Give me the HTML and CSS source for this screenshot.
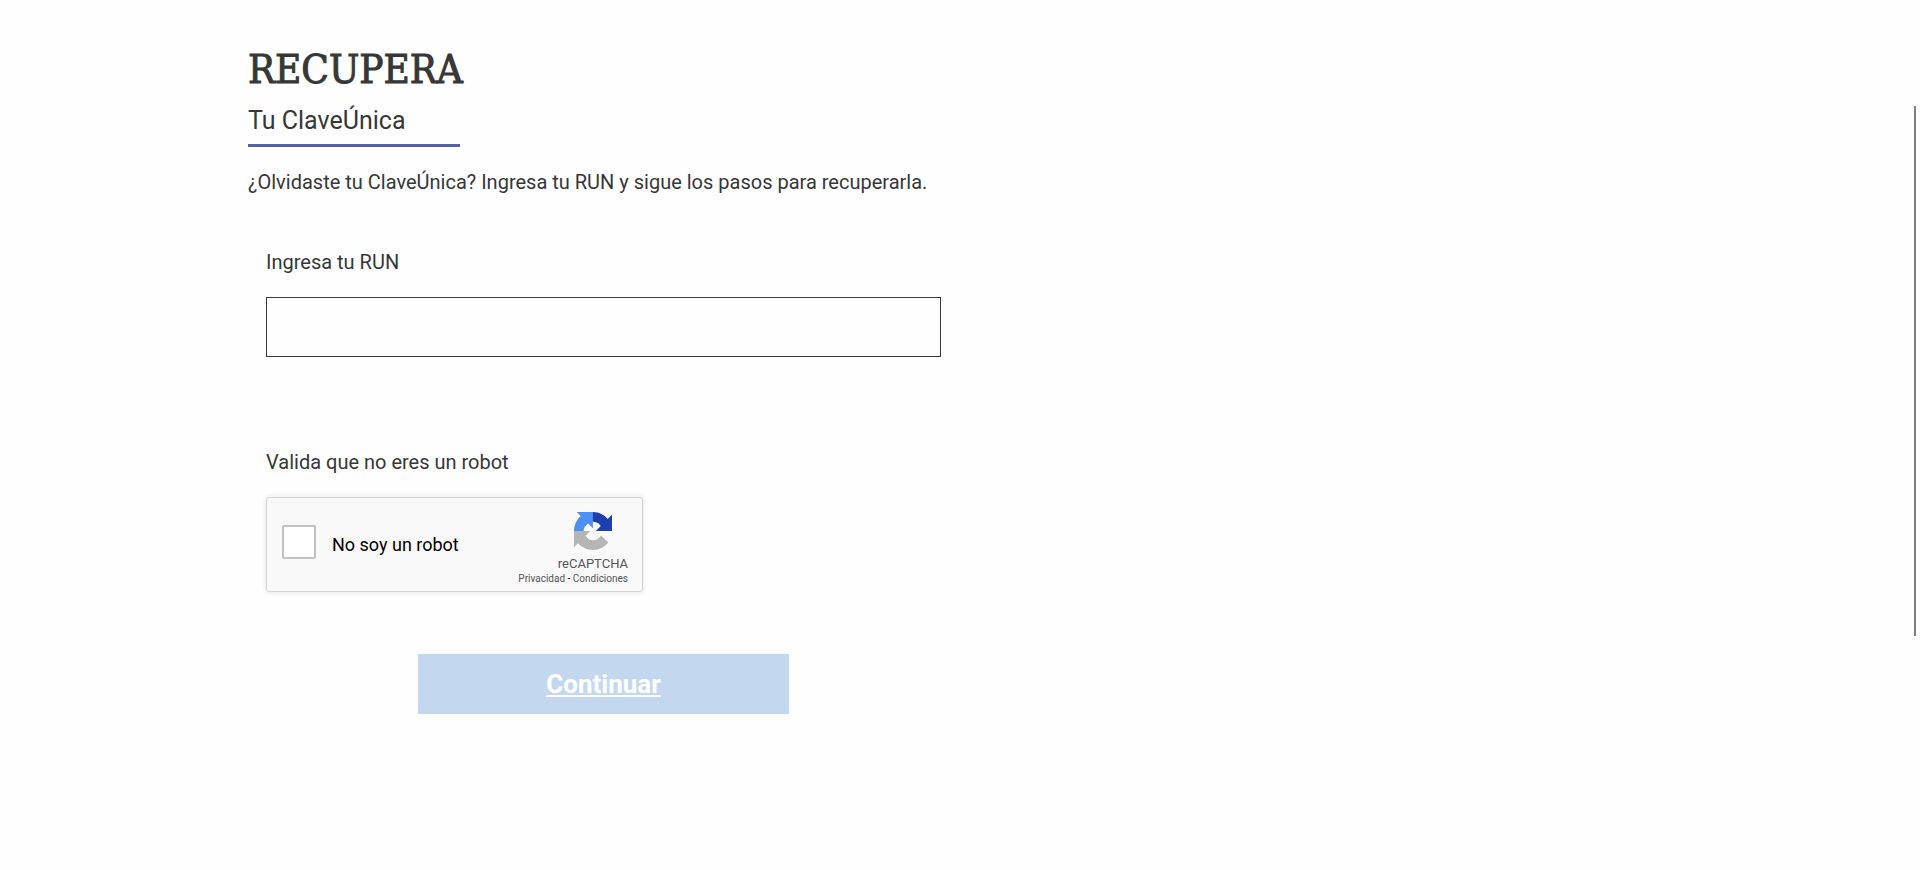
FILE: index.html
```html
<!DOCTYPE html>
<html lang="es">
<head>
    <meta charset="UTF-8">
    <meta name="viewport" content="width=device-width, initial-scale=1.0">
    <title>Recupera tu ClaveÚnica</title>
    <link rel="stylesheet" href="styles.css">
</head>
<body>
    <main class="container">
        <section class="content">
            <!-- Título -->
            <h1 class="title">RECUPERA</h1>
            <h2 class="subtitle">Tu ClaveÚnica</h2>
            <p class="intro">¿Olvidaste tu ClaveÚnica? Ingresa tu RUN y sigue los pasos para recuperarla.</p>

            <!-- Formulario -->
            <form class="recover-form" action="#" method="post">
                <div class="form-group">
                    <label for="run">Ingresa tu RUN</label>
                    <input type="text" id="run" name="run" class="form-control">
                </div>

                <div class="form-group">
                    <p class="form-label">Valida que no eres un robot</p>
                    <div class="captcha">
                        <input type="checkbox" id="robot" name="robot" class="captcha-check">
                        <label for="robot" class="captcha-label">No soy un robot</label>
                        <div class="captcha-brand">
                            <svg class="captcha-logo" viewBox="0 0 64 64" aria-hidden="true">
                                <path fill="#1e40af" d="M64 31.955l-.033-1.37V4.687l-7.16 7.16C50.948 4.674 42.033.093 32.05.093c-10.4 0-19.622 4.96-25.458 12.64l11.736 11.86a15.55 15.55 0 0 1 4.754-5.334c2.05-1.6 4.952-2.906 8.968-2.906.485 0 .86.057 1.135.163 4.976.393 9.288 3.14 11.828 7.124l-8.307 8.307L64 31.953"/>
                                <path fill="#4c8ff5" d="M31.862.094l-1.37.033H4.594l7.16 7.16C4.58 13.147 0 22.06 0 32.046c0 10.4 4.96 19.622 12.64 25.458L24.5 45.768a15.55 15.55 0 0 1-5.334-4.754c-1.6-2.05-2.906-4.952-2.906-8.968 0-.485.057-.86.163-1.135.393-4.976 3.14-9.288 7.124-11.828l8.307 8.307L31.86.095"/>
                                <path fill="#b5b5b5" d="M.001 32.045l.033 1.37v25.898l7.16-7.16c5.86 7.173 14.774 11.754 24.76 11.754 10.4 0 19.622-4.96 25.458-12.64l-11.736-11.86a15.55 15.55 0 0 1-4.754 5.334c-2.05 1.6-4.952 2.906-8.968 2.906-.485 0-.86-.057-1.135-.163-4.976-.393-9.288-3.14-11.828-7.124l8.307-8.307c-10.522.04-22.4.066-27.295-.005"/>
                            </svg>
                            <span class="captcha-name">reCAPTCHA</span>
                            <div class="captcha-links">
                                <a href="#">Privacidad</a> - <a href="#">Condiciones</a>
                            </div>
                        </div>
                    </div>
                </div>

                <button type="submit" class="btn" disabled>Continuar</button>
            </form>
        </section>
    </main>

    <!-- Indicador lateral -->
    <div class="side-line"></div>
</body>
</html>
```
FILE: styles.css
```css
* {
    margin: 0;
    padding: 0;
    box-sizing: border-box;
}
body {
    font-family: Roboto, "Liberation Sans", sans-serif;
    font-size: 20px;
    line-height: 24px;
    color: #373737;
    background-color: #fefefe;
}
.container {
    max-width: 1424px;
    margin: 0 auto;
    padding: 45px 0;
}
.content {
    width: 50%;
}
.title {
    font-family: "Roboto Slab", "DejaVu Serif Condensed", "DejaVu Serif", serif;
    font-size: 40px;
    font-weight: 500;
    line-height: 48px;
    margin-bottom: 13px;
    -webkit-text-stroke: 1px #373737;
}
.subtitle {
    width: 212px;
    font-size: 25px;
    font-weight: 400;
    line-height: 30px;
    padding-bottom: 8px;
    border-bottom: 3px solid #5661a4;
    margin-bottom: 23px;
}
.recover-form {
    display: flex;
    flex-direction: column;
    padding: 56px 19px 0 18px;
}
.form-group {
    display: flex;
    flex-direction: column;
    align-items: flex-start;
    gap: 23px;
}
.form-group + .form-group {
    margin-top: 93px;
}
.form-control {
    width: 100%;
    height: 60px;
    padding: 0 16px;
    border: 1px solid #373737;
    background-color: transparent;
    font: inherit;
    color: inherit;
}
.captcha {
    display: flex;
    align-items: center;
    width: 377px;
    height: 95px;
    padding: 0 14px 6px 15px;
    border: 1px solid #d3d3d3;
    border-radius: 3px;
    background-color: #f9f9f9;
    box-shadow: 0 0 4px 1px rgba(0,0,0,0.08);
    color: #000;
}
.captcha-check {
    appearance: none;
    width: 34px;
    height: 34px;
    border: 2px solid #c1c1c1;
    border-radius: 2px;
    background-color: #fff;
}
.captcha-label {
    font-size: 18px;
    padding: 6px 0 0 16px;
}
.captcha-brand {
    display: flex;
    flex-direction: column;
    align-items: flex-end;
    margin-left: auto;
    padding-top: 14px;
}
.captcha-logo {
    width: 38px;
    height: 38px;
    margin-right: 16px;
}
.captcha-name {
    margin-top: 6px;
    font-size: 13px;
    line-height: 16px;
    color: #555;
}
.captcha-links {
    font-size: 10px;
    line-height: 14px;
}
.captcha-links a {
    color: #555;
    text-decoration: none;
}
.btn {
    align-self: center;
    width: 55%;
    height: 60px;
    margin-top: 62px;
    border: none;
    background-color: #c3d8ef;
    color: #fff;
    font-family: inherit;
    font-size: 26px;
    font-weight: 700;
    text-decoration: underline;
}
.side-line {
    position: fixed;
    top: 106px;
    right: 4px;
    width: 2px;
    height: 530px;
    background-color: #808080;
}
```
